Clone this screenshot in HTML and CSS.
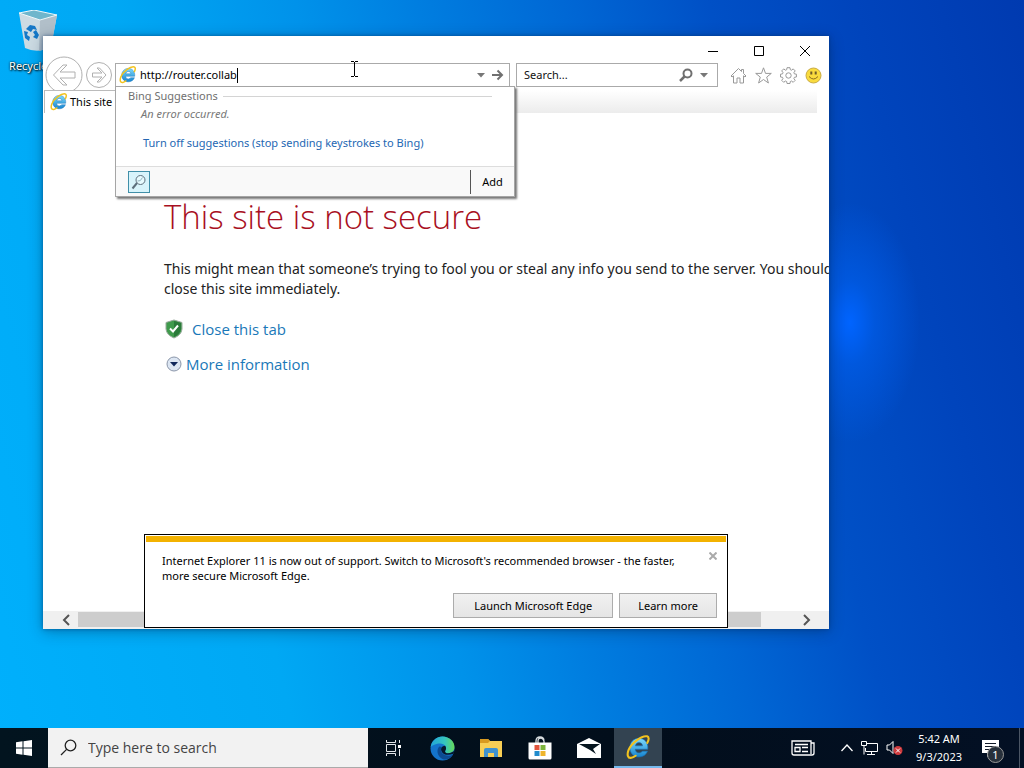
FILE: index.html
```html
<!DOCTYPE html>
<html lang="en">
<head>
<meta charset="utf-8">
<title>Desktop</title>
<link rel="stylesheet" href="styles.css">
</head>
<body>
<svg class="defs" width="0" height="0" aria-hidden="true">
  <defs>
    <linearGradient id="ieBlue" x1="0" y1="0" x2="0" y2="1"><stop offset="0" stop-color="#7fdcfb"/><stop offset="1" stop-color="#1683cf"/></linearGradient>
    <symbol id="ie" viewBox="0 0 24 24">
      <path d="M12.4 3.2c-5 0-8.700 3.900-8.700 9s3.600 8.900 8.700 8.900c3.900 0 7-2.200 8.200-5.500h-5c-.6 1-1.700 1.600-3.100 1.600-2.100 0-3.500-1.400-3.700-3.500h12.100c.7-6.200-3.100-10.500-8.500-10.500zM9 10.400c.4-1.900 1.700-3.100 3.500-3.100s3.200 1.200 3.400 3.100z" fill="url(#ieBlue)" stroke="#1674bb" stroke-width=".6"/>
      <path d="M20.500 7.500c1.800-3.300 1.500-5.700-.2-6.200C15.500.1 5 7.500 2.400 14.600c-1.700 4.700-.6 8 2.700 7.300 1.500-.3 3-1.200 4.100-2" fill="none" stroke="#f3c31e" stroke-width="2" stroke-linecap="round"/>
    </symbol>
  </defs>
</svg>
<main class="desktop">
  <div class="bin">
    <svg width="40" height="42" viewBox="0 0 40 42" aria-hidden="true">
      <path d="M1 3 7 38Q20 44 33 37L39 5Z" fill="#ccdbe3"/>
      <path d="M22 9 39 5 33 37 21 41Z" fill="#b1bfc9"/>
      <path d="M1 3 16 0 39 5 22 10Z" fill="#6fb6cc" stroke="#edf7fa"/>
      <g fill="#1578c7"><path d="m8 19 4-4 5 1 2 4-4-1-2 3Z"/><path d="m18 20 3 5-2 4-4-2 2-2-2-3Z"/><path d="m6 21 4 1-1 3 3 2-1 4-4-3Z"/></g>
    </svg>
    <span>Recycle Bin</span>
  </div>

  <section class="window" aria-label="Internet Explorer">
    <header class="caption">
      <button aria-label="Minimize"><svg width="12" height="12" viewBox="0 0 12 12"><path d="M1 6.500h10"/></svg></button>
      <button aria-label="Maximize"><svg width="12" height="12" viewBox="0 0 12 12"><path d="M1.500 1.500h9v9h-9z"/></svg></button>
      <button aria-label="Close"><svg width="12" height="12" viewBox="0 0 12 12"><path d="m1 1 10 10M11 1 1 11"/></svg></button>
    </header>
    <div class="toolbar">
      <button class="nav back" aria-label="Back"><svg width="38" height="38" viewBox="0 0 38 38"><circle cx="19" cy="19" r="18"/><path d="m18 9-9.500 10L18 29h4l-7-7h15v-6H15l7-7Z"/></svg></button>
      <button class="nav" aria-label="Forward"><svg width="26" height="26" viewBox="0 0 26 26"><circle cx="13" cy="13" r="12.500"/><path d="m13.500 6 6.500 7-6.500 7H11l5-5H6.500v-4H16l-5-5Z"/></svg></button>
      <div class="address">
        <svg width="18" height="18"><use href="#ie"/></svg>
        <input class="url" aria-label="Address" value="http://router.collab" size="15"><i class="caret"></i>
        <span class="space"></span>
        <button aria-label="Show history"><svg width="8" height="5" viewBox="0 0 8 5"><path d="M0 0h8L4 4.500Z" fill="#777"/></svg></button>
        <button aria-label="Go"><svg width="13" height="12" viewBox="0 0 13 12"><path d="M1 6h10M6.500 1.500 11 6l-4.500 4.500" fill="none" stroke="#707070" stroke-width="2"/></svg></button>
        <div class="suggest">
          <div class="sg-head">Bing Suggestions</div>
          <p class="sg-error">An error occurred.</p>
          <a class="sg-off" href="#">Turn off suggestions (stop sending keystrokes to Bing)</a>
          <div class="sg-foot">
            <button class="sg-provider" aria-label="Bing search"><svg width="16" height="16" viewBox="0 0 16 16" fill="none" stroke="#5d6f7c"><circle cx="9.500" cy="6" r="4.500" fill="#e7fbfe"/><path d="m6 9-4.500 5.500" stroke-width="2"/><path d="M6.500 7q3 1 5-3.500" stroke="#91b4c1"/></svg></button>
            <button class="sg-add">Add</button>
          </div>
        </div>
      </div>
      <div class="search">
        <input aria-label="Search" placeholder="Search...">
        <button aria-label="Search"><svg width="14" height="14" viewBox="0 0 14 14" fill="none" stroke="#707070"><circle cx="8.500" cy="5.500" r="4" stroke-width="2"/><path d="M5.500 8.500 1 13" stroke-width="2.500"/></svg></button>
        <button aria-label="Search options"><svg width="8" height="5" viewBox="0 0 8 5"><path d="M0 0h8L4 4.500Z" fill="#777"/></svg></button>
      </div>
      <div class="tools">
        <button aria-label="Home"><svg width="17" height="17" viewBox="0 0 17 17"><path d="M1 9 8.500 1.500l3 3v-2h2v4L16 9l-1 1-1.500-1.200V16h-3.500v-5H7v5H3.500V8.800L2 10Z"/></svg></button>
        <button aria-label="Favorites"><svg width="17" height="17" viewBox="0 0 17 17"><path d="m8.500.8 2 5.600h5.800l-4.600 3.700 1.700 5.900-4.900-3.500L3.600 16l1.700-5.900L.7 6.400h5.800Z"/></svg></button>
        <button aria-label="Tools"><svg width="17" height="17" viewBox="0 0 17 17"><path d="M7 .7h3l.3 2 1.200.5 1.700-1.300 2 2-1.300 1.700.5 1.300 2 .3v2.800l-2 .3-.5 1.300 1.300 1.700-2 2-1.700-1.300-1.200.5-.3 2H7l-.3-2-1.300-.5-1.700 1.300-2-2L3 11.600l-.5-1.300-2-.3V7.200l2-.3.500-1.300-1.300-1.700 2-2 1.700 1.300 1.300-.5Z"/><circle cx="8.500" cy="8.500" r="2.700"/></svg></button>
        <button aria-label="Send a smile"><svg width="17" height="17" viewBox="0 0 17 17"><circle cx="8.500" cy="8.500" r="7.500" style="fill:#f9db3e;stroke:#c9ab45"/><path d="M6.300 4.500v3M10.700 4.500v3" style="stroke:#705c28;stroke-width:2"/><path d="M4 9.500q4.500 5 9 0" style="stroke:#8c6c1d"/></svg></button>
      </div>
    </div>
    <div class="tabs"><div class="tab"><svg width="18" height="18"><use href="#ie"/></svg><span>This site</span></div></div>
    <article class="page">
      <h1>This site is not secure</h1>
      <p>This might mean that someone’s trying to fool you or steal any info you send to the server. You should<br>close this site immediately.</p>
      <div class="action"><svg width="20" height="20" viewBox="0 0 20 20"><path d="M10 1 18 3.500V10q-.5 6-8 9-7.500-3-8-9V3.500Z" fill="#3f9a4c" stroke="#9aaa9d"/><path d="M10 2v16q6-3 7-8V4Z" fill="#2a7a3a"/><path d="m6 9.500 3 3 5-6" fill="none" stroke="#fff" stroke-width="2"/></svg><a href="#">Close this tab</a></div>
      <div class="action more"><svg width="16" height="16" viewBox="0 0 16 16"><circle cx="8" cy="8" r="7" fill="#dce6f3" stroke="#8b96a9"/><path d="M4 6h8l-4 4.500Z" fill="#10275b"/></svg><a href="#">More information</a></div>
    </article>
    <div class="scrollbar">
      <button aria-label="Scroll left"><svg width="10" height="12" viewBox="0 0 10 12"><path d="M8 1 3 6l5 5"/></svg></button>
      <div class="track"><div class="thumb"></div></div>
      <button aria-label="Scroll right"><svg width="10" height="12" viewBox="0 0 10 12"><path d="m2 1 5 5-5 5"/></svg></button>
    </div>
    <aside class="notice">
      <div class="notice-text"><p>Internet Explorer 11 is now out of support. Switch to Microsoft's recommended browser - the faster, more secure Microsoft Edge.</p>
      <button class="dismiss" aria-label="Close notification"><svg width="8" height="8" viewBox="0 0 8 8"><path d="m.5.500 7 7m0-7-7 7" stroke="#aaa" stroke-width="2"/></svg></button></div>
      <div class="notice-actions"><button>Launch Microsoft Edge</button><button>Learn more</button></div>
    </aside>
    <svg class="ibeam" width="9" height="16" viewBox="0 0 9 16" aria-hidden="true"><path d="M1 .5h3m1 0h3M4.500 1v14M1 15.500h3m1 0h3" fill="none" stroke="#000"/></svg>
  </section>
</main>

<footer class="taskbar">
  <button class="start" aria-label="Start"><svg width="16" height="16" viewBox="0 0 16 16" fill="#fff"><path d="M0 2.200 6.500 1.300v6.200H0ZM7.500 1.200 16 0v7.500H7.500ZM0 8.500h6.500v6.200L0 13.800ZM7.500 8.500H16V16l-8.500-1.200Z"/></svg></button>
  <label class="find"><svg width="17" height="17" viewBox="0 0 17 17" fill="none" stroke="#222" stroke-width="1.300"><circle cx="10.500" cy="6.500" r="5.300"/><path d="M6.600 10.400 1 16"/></svg><input aria-label="Type here to search" placeholder="Type here to search"></label>
  <nav class="apps">
    <button aria-label="Task View"><svg width="17" height="16" viewBox="0 0 17 16" fill="none" stroke="#e4e8eb"><path d="M1.500 4.500h9v7h-9zM1.500 0v2.500h9V0M1.500 16v-2.500h9V16M14.500 0v3M14.500 9v7"/><path d="M13 5h3v3h-3z" fill="#fff" stroke="none"/></svg></button>
    <button aria-label="Microsoft Edge"><svg width="25" height="25" viewBox="0 0 24 24">
      <defs><linearGradient id="edgeTop" x1="0" x2="1"><stop stop-color="#22a5d8"/><stop offset=".6" stop-color="#35c5bf"/><stop offset="1" stop-color="#67d957"/></linearGradient></defs>
      <circle cx="12" cy="12" r="11.500" fill="#1474cb"/>
      <path d="M.6 11C1.500 4.500 6.300.5 12 .5c6.700 0 11.500 5 11.500 10 0 4-3 6-6 6-2.700 0-4-1-3-2.200 2.500-3-.3-7-4.800-7C5.800 7.300 2 9 .6 11Z" fill="url(#edgeTop)"/>
      <path d="M9 10c-3 3-2.500 9 3 12 4 1.500 8-.5 10-4-5 2.500-11.500 0-11.500-5 0-1 .5-2 1-2.500Z" fill="#0d4b91"/>
      <path d="M14.500 14.300c1.300-1.500 1.200-3.500 0-5-3 .1-4.500 2.700-3.500 5 1.300 3.500 6 5 11.500 2.700l1.400-3.500c-2 3.300-10 4.300-9.400.8Z" fill="#06172b"/></svg></button>
    <button aria-label="File Explorer"><svg width="22" height="20" viewBox="0 0 22 20"><path d="M0 1h8l2 2h12v16H0Z" fill="#f8ce55"/><path d="M0 1h8l2 2-2 2H0Z" fill="#d99a20"/><path d="M4 19v-7q0-2 2-2h10q2 0 2 2v7h-4v-4H8v4Z" fill="#4092cf"/></svg></button>
    <button aria-label="Microsoft Store"><svg width="24" height="24" viewBox="0 0 24 24"><path d="M8 7V5q0-4 4-4t4 4v2M10 7V5q0-3 3-3 2 0 3 3" fill="none" stroke="#d8dde0" stroke-width="1.300"/><path d="M.5 6.500h23V22q0 1.500-1.500 1.500H2Q.5 23.500.5 22Z" fill="#fff"/><path d="M6.500 9h5v5h-5z" fill="#e1543d"/><path d="M12.500 9h5v5h-5z" fill="#7db43d"/><path d="M6.500 15h5v5h-5z" fill="#218ccd"/><path d="M12.500 15h5v5h-5z" fill="#efb52c"/></svg></button>
    <button aria-label="Mail"><svg width="24" height="20" viewBox="0 0 24 20"><path d="M0 6 12 0l12 6v14H0Z" fill="#fff"/><path d="M2 6h21l-7 5 3 5-6-4Z" fill="#06151f"/></svg></button>
    <button class="active" aria-label="Internet Explorer"><svg width="25" height="25"><use href="#ie"/></svg></button>
  </nav>
  <div class="tray">
    <button class="news" aria-label="News"><svg width="24" height="16" viewBox="0 0 24 16" fill="none" stroke="#fff" stroke-width="1.300"><path d="M20 3V1H1v12q0 2 2 2h18q2 0 2-2V3h-3v11M4 4.500h13M4 7.500h5v4H4zM11 7.500h6M11 11.500h6"/></svg></button>
    <button aria-label="Hidden icons"><svg width="12" height="8" viewBox="0 0 12 8"><path d="m.5 7 5.500-6 5.500 6" fill="none" stroke="#fff" stroke-width="1.300"/></svg></button>
    <button aria-label="Network"><svg width="17" height="14" viewBox="0 0 17 14" fill="none" stroke="#fff"><path d="M6 2.500h10.500v8H4.500V7M.5.500h5v4h-5zM3 5v8.500M6 13.500h8M10.500 11v2"/></svg></button>
    <button aria-label="Volume"><svg width="17" height="16" viewBox="0 0 17 16"><path d="M1 5h2.500L7 1.500v12L3.500 10H1Z" fill="none" stroke="#fff"/><circle cx="12" cy="10.500" r="4.500" fill="#cf3a3d"/><path d="m10 8.500 4 4m0-4-4 4" stroke="#fff"/></svg></button>
    <time class="clock"><span>5:42 AM</span><span>9/3/2023</span></time>
    <button class="action-center" aria-label="Notifications"><svg width="17" height="17" viewBox="0 0 17 17"><path d="M0 0h17v13H9l-4 4v-4H0Z" fill="#fff"/><path d="M3 3.500h11M3 6.500h11M3 9.500h8" stroke="#111a28"/></svg><span class="badge">1</span></button>
  </div>
</footer>
</body>
</html>
```

FILE: styles.css
```css
* { box-sizing: border-box; }
body {
  margin: 0;
  height: 100vh;
  display: flex;
  flex-direction: column;
  overflow: hidden;
  font: 11px/16px "Noto Sans", "Open Sans", sans-serif;
  color: #000;
  background:
    radial-gradient(ellipse 70px 120px at 83% 42%, #0064ff 0, #0060f099 35%, #0060f000 100%),
    linear-gradient(76deg, #00b0fc 0, #00a8f4 25%, #0092ea 40%, #007ee0 50%, #0066d4 63%, #0050c6 74%, #0044bc 86%, #003ab0 100%);
}
button, input { font: inherit; color: inherit; }
button { display: flex; align-items: center; justify-content: center; padding: 0; border: 0; background: none; }
input { min-width: 0; padding: 0; border: 0; outline: 0; background: none; }
p, h1 { margin: 0; }
a { text-decoration: none; }
svg { flex: none; display: block; }
.defs { position: absolute; }

.desktop { position: relative; flex: 1; min-height: 0; }
.bin { position: absolute; left: 0; top: 10px; width: 76px; display: flex; flex-direction: column; align-items: center; gap: 6px; color: #fff; white-space: nowrap; text-shadow: 1px 1px 2px #000, 0 0 2px #000; }

.window {
  position: absolute;
  left: 43px;
  top: 36px;
  width: 786px;
  height: 593px;
  display: flex;
  flex-direction: column;
  background: #fff;
  box-shadow: 0 0 4px #002d6488, 0 3px 14px #00204055;
}
.caption { display: flex; justify-content: flex-end; height: 27px; padding-right: 1px; }
.caption button { width: 46px; height: 30px; }
.caption svg { fill: none; stroke: #000; }

.toolbar { display: flex; align-items: center; height: 24px; padding: 0 7px 0 2px; }
.nav svg { fill: #fff; stroke: #b0b0b0; }
.nav.back { margin-right: 3px; }
.address, .search { display: flex; align-items: center; height: 24px; border: 1px solid #aaa; background: #fff; }
.address { position: relative; z-index: 3; flex: 1; margin-left: 3px; padding: 0 5px 0 3px; }
.url { field-sizing: content; margin-left: 3px; }
.caret { width: 1px; height: 15px; background: #000; }
.space { flex: 1; }
.address button + button { margin-left: 6px; }
.search { flex: 0 0 202px; margin-left: 6px; padding: 0 9px 0 7px; gap: 7px; }
.search input { flex: 1; width: 0; }
.search input::placeholder { color: #111; opacity: 1; }
.tools { display: flex; gap: 8px; margin-left: 12px; }
.tools svg { fill: none; stroke: #999; }

.suggest { position: absolute; left: -1px; top: 22px; width: 400px; height: 111px; display: flex; flex-direction: column; border: 1px solid #a5a5a5; background: #fff; box-shadow: 2px 2px 2px #777; }
.sg-head { display: flex; align-items: center; gap: 5px; padding: 0 22px 0 12px; line-height: 18px; color: #707070; }
.sg-head::after { content: ""; flex: 1; height: 1px; background: #d4d4d4; }
.sg-error { padding-left: 25px; line-height: 18px; font-style: italic; color: #777; }
.sg-off { padding: 12px 0 0 27px; color: #2467b3; }
.sg-foot { display: flex; align-items: center; justify-content: space-between; height: 30px; margin-top: auto; padding-left: 12px; border-top: 1px solid #ddd; background: #f9f9f9; }
.sg-provider { width: 22px; height: 22px; border: 1px solid #408fa8; background: #d8f4fb; }
.sg-add { width: 44px; height: 24px; border-left: 1px solid #555; }

.tabs { height: 23px; margin: 3px 12px 0 1px; background: linear-gradient(#fff, #ececec); }
.tab { display: flex; align-items: center; gap: 2px; width: 180px; height: 23px; padding-left: 5px; border: solid #bbb; border-width: 1px 0 0 1px; background: #fff; }

.page { flex: 1; min-height: 0; overflow: hidden; padding: 80px 0 0 121px; white-space: nowrap; color: #222; }
.page h1 { font: 300 33px/48px "Open Sans", "Noto Sans", sans-serif; color: #a80f22; }
.page p { margin-top: 18px; font-size: 14px; line-height: 20px; }
.action { display: flex; align-items: center; gap: 8px; margin-top: 20px; font: 15px/20px "Open Sans", "Noto Sans", sans-serif; }
.action.more { gap: 4px; margin-top: 15px; padding-left: 2px; }
.action a { color: #1a78b8; }

.scrollbar { display: flex; height: 18px; padding: 1px 13px; background: #f0f0f0; }
.scrollbar button { width: 19px; }
.scrollbar svg { fill: none; stroke: #555; stroke-width: 2; }
.track { flex: 1; padding-left: 3px; }
.thumb { width: 95%; height: 15px; background: #cdcdcd; }

.notice { position: absolute; left: 101px; right: 101px; bottom: 1px; height: 94px; padding: 1px; border: 1px solid #000; background: #fff; }
.notice::before { content: ""; display: block; height: 6px; background: #f3b200; }
.notice-text { display: flex; align-items: flex-start; justify-content: space-between; padding: 11px 9px 0 16px; line-height: 15px; }
.notice-text p { width: 530px; }
.dismiss { height: 8px; margin-top: -1px; }
.notice-actions { display: flex; justify-content: flex-end; gap: 6px; margin-top: 10px; padding-right: 9px; }
.notice-actions button { height: 25px; padding: 0 18px; border: 1px solid #acacac; background: linear-gradient(#f1f1f1, #e5e5e5); }
.notice-actions button:first-child { padding: 0 20px; }
.ibeam { position: absolute; left: 307px; top: 25px; z-index: 4; }

.taskbar { position: relative; display: flex; height: 40px; color: #fff; background: linear-gradient(90deg, #02141f, #020e1b 60%, #031024); }
.start { width: 48px; }
.find { display: flex; align-items: center; gap: 11px; width: 320px; padding-left: 12px; border-bottom: 1px solid #aaa; background: #f2f2f2; color: #333; font: 14px/20px "Open Sans", "Noto Sans", sans-serif; }
.find input { flex: 1; }
.find input::placeholder { color: #444; opacity: 1; }
.apps { display: flex; gap: 1px; padding-left: 1px; }
.apps button { width: 48px; height: 40px; }
.apps .active { background: #334351; border-bottom: 2px solid #76b9ed; }
.tray { display: flex; align-items: center; margin-left: auto; }
.tray .news { margin-right: 26px; }
.tray button + button { margin-right: 8px; }
.clock { display: flex; flex-direction: column; align-items: center; width: 56px; margin-right: 15px; line-height: 18px; }
.tray .action-center { position: relative; width: 22px; height: 40px; padding-right: 5px; margin-right: 20px; }
.badge { position: absolute; left: 5px; top: 18px; width: 17px; height: 17px; border: 1px solid #999; border-radius: 50%; background: #27303b; line-height: 15px; text-align: center; }
.taskbar::after { content: ""; position: absolute; right: 4px; top: 0; width: 1px; height: 40px; background: #4b5665; }
```
